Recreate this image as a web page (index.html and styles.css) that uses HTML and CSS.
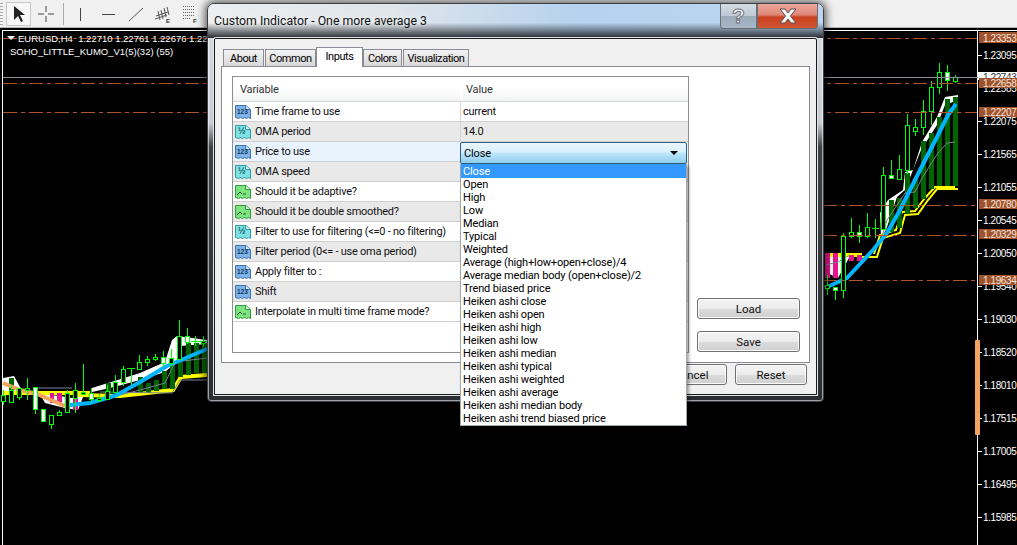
FILE: index.html
```html
<!DOCTYPE html>
<html lang="en">
<head>
<meta charset="utf-8">
<title>Custom Indicator - One more average 3</title>
<link rel="stylesheet" href="styles.css">
</head>
<body>
<svg class="defs" width="0" height="0" aria-hidden="true">
  <defs>
    <symbol id="doc" viewBox="0 0 16 16">
      <path d="M.5 1.500h10.500l4.500 4v9l-2-1-2 1-2-1-2 1-2-1-2 1-3-1z" fill="currentColor" stroke="var(--edge)"/>
      <path d="M10.500 1.500v4h5" fill="#fff" fill-opacity=".7" stroke="var(--edge)"/>
    </symbol>
  </defs>
</svg>

<header class="toolbar">
  <div class="grip"></div>
  <button class="tool tool-on"><svg width="14" height="18" viewBox="0 0 14 18"><path d="M2 1v14l4-4 3 6 2-1-3-6h5z" fill="#222"/></svg></button>
  <span class="tool-icon"><svg width="16" height="16" viewBox="0 0 16 16"><path d="M8 0v6M8 10v6M0 8h6M10 8h6" stroke="#444"/></svg></span>
  <span class="tool-sep"></span>
  <span class="tool-icon"><svg width="16" height="16" viewBox="0 0 16 16"><path d="M8.500 2v13" stroke="#444"/></svg></span>
  <span class="tool-icon"><svg width="16" height="16" viewBox="0 0 16 16"><path d="M2 8.500h13" stroke="#444"/></svg></span>
  <span class="tool-icon"><svg width="16" height="16" viewBox="0 0 16 16"><path d="M1 15L15 2" stroke="#555"/></svg></span>
  <span class="tool-icon"><svg width="20" height="20" viewBox="0 0 20 20"><path d="M2 12l12-4M1 15l12-4M4 7l2 9M7 6l2 9M10 4l2 9M13 3l2 8" stroke="#555"/><text x="12" y="19" class="tool-letter">E</text></svg></span>
  <span class="tool-icon"><svg width="20" height="20" viewBox="0 0 20 20"><path d="M1 2.500h12M1 5.500h12M1 8.500h12M1 11.500h12M1 14.500h7" stroke="#666" stroke-dasharray="1 1"/><text x="11" y="19" class="tool-letter">F</text></svg></span>
</header>

<svg class="chart" viewBox="0 28 1017 517" width="1017" height="517" role="img" aria-label="EURUSD H4 chart">
  <rect class="frame" x="2.500" y="30.500" width="1020" height="520"/>
  <path class="axis" d="M977.500 30v515"/>

  <!-- left cluster -->
  <path class="white" d="M3 378L14 376 20 387 25 392H3z"/>
  <path class="white" d="M40 394L60 396 72 398 85 392 78 410 65 408 45 403z"/>
  <path class="white" d="M92 388L140 373 165 362 172 340 177 336 207 340V344L180 346 177 362 165 372 140 380 110 388 92 392z"/>
  <path class="yellow-thick" d="M3 393H90"/>
  <path class="yellow-thick" d="M78 395L120 396 147 393 173 390 181 377 207 375"/>
  <g class="bars">
    <rect x="9" y="378" width="5" height="12"/><rect x="106" y="383" width="5" height="11"/><rect x="138" y="377" width="5" height="16"/>
    <rect x="146" y="383" width="5" height="10"/><rect x="154" y="380" width="5" height="11"/><rect x="162" y="371" width="5" height="18"/>
    <rect x="170" y="363" width="5" height="26"/><rect x="178" y="362" width="5" height="15"/><rect x="186" y="343" width="5" height="32"/>
    <rect x="194" y="343" width="5" height="30"/><rect x="202" y="343" width="5" height="30"/>
  </g>
  <g class="pink">
    <rect x="50" y="393" width="4" height="10"/><rect x="57" y="393" width="5" height="10"/><rect x="73" y="393" width="5" height="17"/>
  </g>
  <path class="thin" d="M38 388H72M100 392L172 393 180 380 207 380M120 395L140 390 165 383 175 362 207 358"/>
  <path class="orange" d="M3 383L20 390 37 394 65 406"/>
  <path class="blue" d="M70 405L90 403 117 395 140 382 167 366 207 349"/>

  <!-- right cluster -->
  <path class="white" d="M958 95L945 97 937 117 922 142 913 170 905 172 903 190 888 200 880 213 881 237 886 230 897 197 905 190 921 150 937 125 945 105 958 100z"/>
  <path class="white" d="M825 256H850L838 278 825 272z"/>
  <path class="yellow" d="M958 189H937L928 200 918 214 905 215 900 233 883 238 877 257 860 257"/>
  <path class="yellow" d="M955 187H935L925 198 915 211 902 212 896 230 880 235 874 254"/>
  <path class="yellow-thick" d="M825 255H862"/>
  <g class="bars">
    <rect x="905" y="173" width="5" height="41"/><rect x="913" y="178" width="5" height="30"/><rect x="921" y="141" width="5" height="58"/>
    <rect x="929" y="133" width="5" height="56"/><rect x="937" y="117" width="5" height="69"/><rect x="945" y="99" width="5" height="87"/>
    <rect x="953" y="97" width="5" height="89"/><rect x="889" y="200" width="5" height="32"/><rect x="897" y="198" width="5" height="30"/>
  </g>
  <g class="pink">
    <rect x="825" y="253" width="5" height="25"/><rect x="833" y="253" width="5" height="25"/><rect x="849" y="255" width="5" height="6"/><rect x="857" y="255" width="5" height="6"/>
  </g>
  <path class="thin" d="M955 142L947 143 938 153 922 178 915 192 905 193 887 220 881 240M825 265L838 262 850 255"/>
  <path class="blue" d="M956 104L948 115 937 137 920 170 900 210 887 233 873 250 847 278 825 288"/>

  <!-- candle wicks -->
  <path class="wick" d="M19.500 388v12M27.500 378v22M35.500 409v5M51.500 424v5M59.500 410v3M67.500 390v3M75.500 383v30M83.500 364v30M91.500 388v14M99.500 394v8M107.500 385v8M115.500 375v18M123.500 366v20M131.500 368v17M139.500 355v10M147.500 356v10M155.500 354v7M163.500 351v16M171.500 349v17M179.500 320v20M187.500 328v16M195.500 336v10M203.500 336v10M3.500 390v15M11.500 385v15"/>
  <path class="wick" d="M827.500 275v20M835.500 290v10M843.500 233v65M851.500 218v20M859.500 225v18M867.500 213v25M875.500 219v19M883.500 167v8M891.500 160v19M899.500 155v24M907.500 114v60M915.500 119v17M923.500 100v35M931.500 81v44M939.500 63v31M947.500 65v26M955.500 75v8"/>
  <path class="wick" d="M872 228.500h7"/>
  <path class="wick" d="M127 368.500h8M191 341.500h8M199 341.500h8"/>

  <!-- hollow bodies -->
  <g class="body">
    <rect x="17.500" y="388.500" width="4" height="9"/><rect x="25.500" y="388.500" width="4" height="2"/><rect x="49.500" y="415.500" width="4" height="9"/>
    <rect x="57.500" y="412.500" width="4" height="3"/><rect x="65.500" y="393.500" width="4" height="19"/><rect x="73.500" y="390.500" width="4" height="8"/>
    <rect x="81.500" y="392.500" width="4" height="2"/><rect x="97.500" y="398.500" width="4" height="2"/><rect x="105.500" y="391.500" width="4" height="8"/>
    <rect x="113.500" y="382.500" width="4" height="10"/><rect x="121.500" y="369.500" width="4" height="13"/><rect x="137.500" y="362.500" width="4" height="7"/>
    <rect x="145.500" y="359.500" width="4" height="3"/><rect x="153.500" y="357.500" width="4" height="2"/><rect x="169.500" y="358.500" width="4" height="5"/>
    <rect x="177.500" y="336.500" width="4" height="23"/><rect x="201.500" y="341.500" width="4" height="2"/><rect x="1.500" y="395.500" width="4" height="6"/><rect x="9.500" y="390.500" width="4" height="12"/>
    <rect x="825.500" y="285.500" width="4" height="3"/><rect x="841.500" y="236.500" width="4" height="54"/><rect x="849.500" y="232.500" width="4" height="4"/>
    <rect x="865.500" y="227.500" width="4" height="9"/><rect x="881.500" y="175.500" width="4" height="54"/><rect x="897.500" y="169.500" width="4" height="10"/>
    <rect x="905.500" y="125.500" width="4" height="45"/><rect x="913.500" y="127.500" width="4" height="4"/><rect x="921.500" y="111.500" width="4" height="16"/>
    <rect x="929.500" y="87.500" width="4" height="24"/><rect x="937.500" y="72.500" width="4" height="15"/><rect x="953.500" y="77.500" width="4" height="4"/>
  </g>
  <g class="body body-up">
    <rect x="33.500" y="387.500" width="4" height="22"/><rect x="41.500" y="409.500" width="4" height="12"/><rect x="89.500" y="393.500" width="4" height="6"/>
    <rect x="161.500" y="357.500" width="4" height="6"/><rect x="185.500" y="336.500" width="4" height="6"/><rect x="833.500" y="287.500" width="4" height="3"/>
    <rect x="857.500" y="232.500" width="4" height="4"/><rect x="889.500" y="175.500" width="4" height="3"/><rect x="945.500" y="72.500" width="4" height="8"/>
  </g>

  <!-- horizontal levels -->
  <path class="level" d="M3 38.500H977M3 83.500H977M3 112.500H977M823 205.500H977M823 235.500H977M823 280.500H977"/>
  <path class="price-line" d="M3 77.500H1017"/>

  <!-- legend -->
  <path class="legend-arrow" d="M7 36h8l-4 4z"/>
  <text class="legend" x="18" y="42">EURUSD,H4  1.22710 1.22761 1.22676 1.227</text>
  <text class="legend" x="10" y="55">SOHO_LITTLE_KUMO_V1(5)(32) (55)</text>

  <!-- price scale -->
  <path class="axis-tick" d="M977 55.500h5M977 121.500h5M977 154.500h5M977 187.500h5M977 220.500h5M977 253.500h5M977 286.500h5M977 319.500h5M977 352.500h5M977 385.500h5M977 418.500h5M977 451.500h5M977 484.500h5M977 517.500h5"/>
  <rect class="scroll-mark" x="975" y="340" width="5" height="95" rx="1"/>
  <g class="scale">
    <text x="983" y="59">1.23095</text>
    <text x="983" y="92">1.22585</text>
    <text x="983" y="125">1.22075</text>
    <text x="983" y="158">1.21565</text>
    <text x="983" y="191">1.21055</text>
    <text x="983" y="224">1.20545</text>
    <text x="983" y="257">1.20050</text>
    <text x="983" y="290">1.19540</text>
    <text x="983" y="323">1.19030</text>
    <text x="983" y="356">1.18520</text>
    <text x="983" y="389">1.18010</text>
    <text x="983" y="422">1.17515</text>
    <text x="983" y="455">1.17005</text>
    <text x="983" y="488">1.16495</text>
    <text x="983" y="521">1.15985</text>
  </g>
  <rect class="tag-white" x="978" y="72" width="39" height="8"/>
  <text class="scale-dark" x="983" y="81">1.22743</text>
  <g class="tags">
    <rect x="979" y="32" width="38" height="11"/><rect x="979" y="78" width="38" height="10"/><rect x="979" y="107" width="38" height="10"/>
    <rect x="979" y="199" width="38" height="10"/><rect x="979" y="229" width="38" height="10"/><rect x="979" y="275" width="38" height="10"/>
  </g>
  <g class="scale scale-tag">
    <text x="983" y="42">1.23353</text>
    <text x="983" y="87">1.22658</text>
    <text x="983" y="116">1.22207</text>
    <text x="983" y="208">1.20780</text>
    <text x="983" y="238">1.20329</text>
    <text x="983" y="284">1.19634</text>
  </g>
</svg>

<section class="dialog">
  <div class="titlebar">
    <span class="title">Custom Indicator - One more average 3</span>
    <div class="caption-buttons">
      <button class="cap cap-help">?</button>
      <button class="cap cap-close"><svg width="20" height="16" viewBox="0 0 20 16"><path d="M2 1h5l3 4 3-4h5l-5.500 7 5.500 7h-5l-3-4-3 4H2l5.500-7z" fill="#f4f4f4" stroke="#5a4a48"/></svg></button>
    </div>
  </div>
  <div class="client">
    <nav class="tabs">
      <span class="tab">About</span>
      <span class="tab">Common</span>
      <span class="tab tab-on">Inputs</span>
      <span class="tab">Colors</span>
      <span class="tab">Visualization</span>
    </nav>
    <div class="panel">
      <div class="params">
        <div class="params-head"><span class="col-a">Variable</span><span class="col-b">Value</span></div>
        <div class="row"><span class="col-a"><svg class="ico ico-int"><use href="#doc"/></svg><b class="ico-txt">123</b>Time frame to use</span><span class="col-b">current</span></div>
        <div class="row row-alt"><span class="col-a"><svg class="ico ico-dbl"><use href="#doc"/></svg><b class="ico-txt ico-txt-dbl">½</b>OMA period</span><span class="col-b">14.0</span></div>
        <div class="row row-sel"><span class="col-a"><svg class="ico ico-int"><use href="#doc"/></svg><b class="ico-txt">123</b>Price to use</span><span class="col-b"></span></div>
        <div class="row row-alt"><span class="col-a"><svg class="ico ico-dbl"><use href="#doc"/></svg><b class="ico-txt ico-txt-dbl">½</b>OMA speed</span><span class="col-b"></span></div>
        <div class="row"><span class="col-a"><svg class="ico ico-bool"><use href="#doc"/></svg><svg class="ico-mark" viewBox="0 0 10 6"><path d="M0 5l3-3 2 2M6 4h3"/></svg>Should it be adaptive?</span><span class="col-b"></span></div>
        <div class="row row-alt"><span class="col-a"><svg class="ico ico-bool"><use href="#doc"/></svg><svg class="ico-mark" viewBox="0 0 10 6"><path d="M0 5l3-3 2 2M6 4h3"/></svg>Should it be double smoothed?</span><span class="col-b"></span></div>
        <div class="row"><span class="col-a"><svg class="ico ico-dbl"><use href="#doc"/></svg><b class="ico-txt ico-txt-dbl">½</b>Filter to use for filtering (&lt;=0 - no filtering)</span><span class="col-b"></span></div>
        <div class="row row-alt"><span class="col-a"><svg class="ico ico-int"><use href="#doc"/></svg><b class="ico-txt">123</b>Filter period (0&lt;= - use oma period)</span><span class="col-b"></span></div>
        <div class="row"><span class="col-a"><svg class="ico ico-int"><use href="#doc"/></svg><b class="ico-txt">123</b>Apply filter to :</span><span class="col-b"></span></div>
        <div class="row row-alt"><span class="col-a"><svg class="ico ico-int"><use href="#doc"/></svg><b class="ico-txt">123</b>Shift</span><span class="col-b"></span></div>
        <div class="row"><span class="col-a"><svg class="ico ico-bool"><use href="#doc"/></svg><svg class="ico-mark" viewBox="0 0 10 6"><path d="M0 5l3-3 2 2M6 4h3"/></svg>Interpolate in multi time frame mode?</span><span class="col-b"></span></div>
      </div>
      <div class="side-buttons">
        <button class="btn">Load</button>
        <button class="btn">Save</button>
      </div>
    </div>
    <div class="footer">
      <button class="btn btn-foot">Cancel</button>
      <button class="btn btn-foot">Reset</button>
    </div>
  </div>

  <div class="combo">
    <div class="combo-box"><span>Close</span><i class="combo-arrow"></i></div>
    <ul class="combo-list">
      <li class="combo-on">Close</li>
      <li>Open</li>
      <li>High</li>
      <li>Low</li>
      <li>Median</li>
      <li>Typical</li>
      <li>Weighted</li>
      <li>Average (high+low+open+close)/4</li>
      <li>Average median body (open+close)/2</li>
      <li>Trend biased price</li>
      <li>Heiken ashi close</li>
      <li>Heiken ashi open</li>
      <li>Heiken ashi high</li>
      <li>Heiken ashi low</li>
      <li>Heiken ashi median</li>
      <li>Heiken ashi typical</li>
      <li>Heiken ashi weighted</li>
      <li>Heiken ashi average</li>
      <li>Heiken ashi median body</li>
      <li>Heiken ashi trend biased price</li>
    </ul>
  </div>
</section>
</body>
</html>
```
FILE: styles.css
```css
* { box-sizing: border-box; }
html, body { margin: 0; height: 100%; }
body {
  width: 1017px;
  height: 545px;
  position: relative;
  overflow: hidden;
  background: #000;
  font: 11px/1 Roboto, "Liberation Sans", sans-serif;
  letter-spacing: -.15px;
  color: #000;
}
.defs { position: absolute; }

/* toolbar */
.toolbar {
  height: 28px;
  background: #f0f0f0;
  border-bottom: 1px solid #b4b4b4;
  display: flex;
  align-items: center;
}
.grip {
  width: 3px;
  height: 22px;
  margin-right: 3px;
  background: repeating-linear-gradient(#a8a8a8 0 1px, #f4f4f4 1px 3px);
}
.tool {
  width: 25px;
  height: 24px;
  margin-right: 1px;
  padding: 0;
  background: #f7f7f7;
  border: 1px solid #c8c8c8;
  display: flex;
  align-items: center;
  justify-content: center;
}
.tool-icon { width: 28px; display: flex; justify-content: center; }
.tool-sep { width: 1px; height: 22px; background: #aaa; margin: 0 2px 0 3px; }
.tool-letter { font: bold 6px "Liberation Sans", sans-serif; fill: #333; }

/* chart */
.chart { display: block; }
.frame { fill: #000; stroke: #fff; }
.axis, .axis-tick { stroke: #fff; fill: none; }
.white { fill: #fff; }
.yellow { fill: none; stroke: #ff0; stroke-width: 2; }
.yellow-thick { fill: none; stroke: #ff0; stroke-width: 4; }
.bars rect { fill: #006400; }
.pink rect { fill: #e6148c; }
.thin { fill: none; stroke: #7a8490; }
.blue { fill: none; stroke: #00b4ff; stroke-width: 4; stroke-linejoin: round; }
.orange { fill: none; stroke: #f4a460; stroke-width: 4; }
.wick { fill: none; stroke: #0f0; }
.body rect { fill: #000; stroke: #0f0; }
.body-up rect { fill: #fff; }
.level { fill: none; stroke: #b0552b; stroke-dasharray: 14 4 4 4; }
.price-line { stroke: #8a8f96; fill: none; }
.legend-arrow { fill: #fff; }
.legend { fill: #fff; font: 9.500px "Liberation Sans", sans-serif; letter-spacing: 0; white-space: pre; }
.scale text { fill: #fff; font: 10px "Liberation Sans", sans-serif; letter-spacing: -.4px; }
.scale-tag text { fill: #f4e6dc; }
.scale-dark { fill: #333; font: 10px "Liberation Sans", sans-serif; letter-spacing: -.4px; }
.tag-white { fill: #fff; }
.tags rect { fill: #a0522d; }
.scroll-mark { fill: #f4a460; }

/* dialog */
.dialog {
  position: absolute;
  left: 207px;
  top: 3px;
  width: 617px;
  height: 399px;
  display: flex;
  flex-direction: column;
  padding: 0 6px 6px;
  border: 1px solid #3c4046;
  border-radius: 7px 7px 4px 4px;
  box-shadow: 0 0 9px 2px rgba(0, 0, 0, .65), inset 0 0 0 1px rgba(255, 255, 255, .55);
  background: linear-gradient(#d9dfe5 0, #c6cdd4 30%, #3e4146 36%, #2b2d31 100%);
}
.titlebar {
  height: 34px;
  margin: 0 -6px;
  padding-left: 6px;
  display: flex;
  justify-content: space-between;
  align-items: flex-start;
  border-radius: 7px 7px 0 0;
  background:
    linear-gradient(rgba(30, 34, 40, 0) 55%, rgba(30, 34, 40, .95) 100%),
    linear-gradient(90deg, #eceef0 0, #dfe5ea 30%, #b6d2ee 60%, #bcd6f0 100%);
}
.title {
  margin-top: 11px;
  font-size: 12.300px;
  letter-spacing: 0;
  color: #111;
  text-shadow: 0 0 6px #fff;
}
.caption-buttons { display: flex; margin-right: 5px; }
.cap {
  height: 25px;
  padding: 0;
  border: 1px solid #6a6f76;
  border-top: 0;
  display: flex;
  align-items: center;
  justify-content: center;
}
.cap-help {
  width: 37px;
  border-radius: 0 0 0 4px;
  font: bold 21px "Liberation Sans", sans-serif;
  color: #fff;
  -webkit-text-stroke: 1px #6c7076;
  background: linear-gradient(#d4dce4 0, #bcc8d4 50%, #9caab8 51%, #a8b8c8 100%);
}
.cap-close {
  width: 61px;
  border-radius: 0 0 4px 0;
  background: linear-gradient(#eba99c 0, #dd8676 45%, #c9401f 55%, #d15634 100%);
}
.client {
  flex: 1;
  position: relative;
  display: flex;
  flex-direction: column;
  padding: 7px 6px 0 6px;
  background: #f0f0f0;
  border: 1px solid #1c1c1c;
  border-radius: 2px 2px 0 0;
  box-shadow: 0 0 0 1px #dfe3e6;
}
.tabs {
  display: grid;
  grid-template-columns: 42px 52px 46px 40px 67px;
  justify-content: start;
  height: 20px;
  padding-left: 2px;
  align-items: end;
  position: relative;
  z-index: 1;
  letter-spacing: -.45px;
}
.tab {
  height: 17px;
  padding-top: 3px;
  margin-right: 1px;
  text-align: center;
  background: linear-gradient(#f2f2f2, #d8d8d8);
  border: 1px solid #898c95;
  border-bottom: 0;
}
.tab-on {
  height: 20px;
  margin: 0 0 -1px -1px;
  background: #fff;
  position: relative;
}
.panel {
  height: 297px;
  display: flex;
  gap: 8px;
  padding: 9px 11px 9px 10px;
  background: #fff;
  border: 1px solid #898c95;
}
.params {
  width: 457px;
  border: 1px solid #8f8f8f;
  flex: none;
}
.params-head {
  display: flex;
  height: 25px;
  align-items: center;
  color: #333;
  background: linear-gradient(#fff 40%, #f3f4f5);
  border-bottom: 1px solid #d5d5d5;
}
.col-a { width: 227px; flex: none; display: flex; align-items: center; position: relative; }
.col-b { flex: 1; align-self: stretch; display: flex; align-items: center; padding-left: 2px; border-left: 1px solid #d5d5d5; }
.params-head .col-a { padding-left: 7px; }
.params-head .col-b { padding-left: 4px; border-left: 2px solid #fff; }
.row {
  display: flex;
  height: 20px;
  border-bottom: 1px solid #d0d0d0;
  background: #fff;
  color: #111;
  letter-spacing: -.25px;
  white-space: nowrap;
}
.row-alt { background: #e9e9e9; }
.row-sel { background: #e8f3fd; }
.ico { width: 16px; height: 16px; margin: 0 4px 0 2px; flex: none; }
.ico-int { color: #7fb2e6; --edge: #3f75ac; }
.ico-dbl { color: #7fe2e2; --edge: #2f9aa4; }
.ico-bool { color: #7ee482; --edge: #2f9a3c; }
.ico-txt {
  position: absolute;
  left: 4px;
  top: 7px;
  font: bold 6.500px/1 "Liberation Sans", sans-serif;
  letter-spacing: 0;
  color: #10385c;
}
.ico-txt-dbl { left: 5px; top: 5px; font-size: 9px; color: #0f5a60; }
.ico-mark {
  position: absolute;
  left: 4px;
  top: 8px;
  width: 10px;
  height: 6px;
  fill: none;
  stroke: #0e5a14;
}
.side-buttons {
  width: 103px;
  align-self: flex-end;
  margin-bottom: 1px;
  display: flex;
  flex-direction: column;
  gap: 12px;
  flex: none;
}
.btn {
  height: 21px;
  padding: 0;
  font: 11.500px Roboto, "Liberation Sans", sans-serif;
  color: #111;
  border: 1px solid #707070;
  border-radius: 3px;
  background: linear-gradient(#f4f4f4 0, #ebebeb 50%, #dcdcdc 51%, #cfcfcf 100%);
  box-shadow: inset 0 0 0 1px #fbfbfb;
}
.footer { display: flex; justify-content: flex-end; gap: 8px; padding: 1px 3px 0 0; }
.btn-foot { width: 72px; }

/* drop-down */
.combo { position: absolute; left: 252px; top: 138px; width: 227px; }
.combo-box {
  height: 22px;
  display: flex;
  align-items: center;
  justify-content: space-between;
  padding: 0 8px 0 3px;
  border: 1px solid #2c5f85;
  border-radius: 2px;
  background: linear-gradient(#eaf6fd 0, #d9f0fc 45%, #bee6fd 50%, #8fcdea 100%);
}
.combo-arrow { width: 0; height: 0; border: 4px solid transparent; border-top: 4px solid #000; border-bottom: 0; }
.combo-list {
  list-style: none;
  margin: 0;
  padding: 0;
  background: #fff;
  border: 1px solid #a0a8b0;
  border-top: 0;
  box-shadow: 2px 2px 3px rgba(0, 0, 0, .35);
}
.combo-list li { height: 13px; padding-left: 2px; line-height: 13px; white-space: nowrap; }
.combo-list .combo-on { height: 14px; background: #39f; color: #fff; line-height: 15px; }
```
